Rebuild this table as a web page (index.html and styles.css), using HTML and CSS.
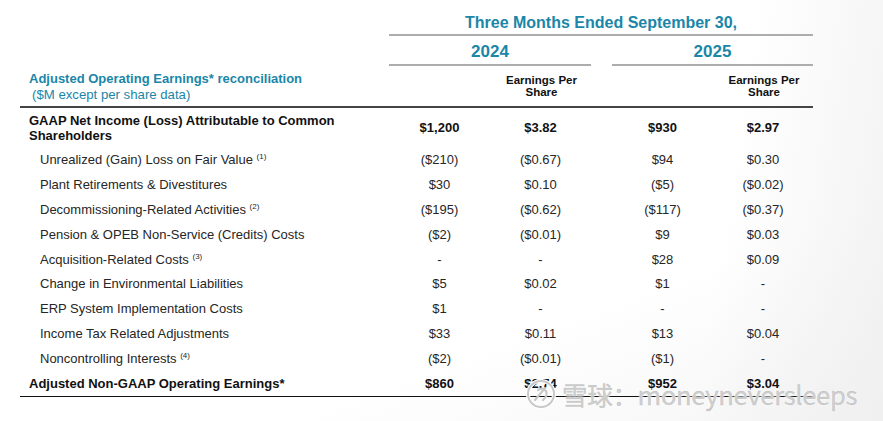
FILE: index.html
```html
<!DOCTYPE html>
<html>
<head>
<meta charset="utf-8">
<link rel="stylesheet" href="styles.css">
</head>
<body>
<div class="page">
  <div class="table">
    <div class="row head-title">
      <div></div>
      <div class="title">Three Months Ended September 30,</div>
    </div>
    <div class="row head-years">
      <div></div>
      <div class="year y1">2024</div>
      <div class="year y2">2025</div>
    </div>
    <div class="row head-sub">
      <div class="sect">
        <div class="sect-title">Adjusted Operating Earnings* reconciliation</div>
        <div class="sect-note">($M except per share data)</div>
      </div>
      <div></div>
      <div class="eps">Earnings Per<br>Share</div>
      <div></div>
      <div></div>
      <div class="eps">Earnings Per<br>Share</div>
    </div>

    <div class="row gaap bold">
      <div class="label">GAAP Net Income (Loss) Attributable to Common<br>Shareholders</div>
      <div class="num">$1,200</div><div class="num">$3.82</div><div></div><div class="num">$930</div><div class="num">$2.97</div>
    </div>
    <div class="row item">
      <div class="label">Unrealized (Gain) Loss on Fair Value <sup>(1)</sup></div>
      <div class="num">($210)</div><div class="num">($0.67)</div><div></div><div class="num">$94</div><div class="num">$0.30</div>
    </div>
    <div class="row item">
      <div class="label">Plant Retirements &amp; Divestitures</div>
      <div class="num">$30</div><div class="num">$0.10</div><div></div><div class="num">($5)</div><div class="num">($0.02)</div>
    </div>
    <div class="row item">
      <div class="label">Decommissioning-Related Activities <sup>(2)</sup></div>
      <div class="num">($195)</div><div class="num">($0.62)</div><div></div><div class="num">($117)</div><div class="num">($0.37)</div>
    </div>
    <div class="row item">
      <div class="label">Pension &amp; OPEB Non-Service (Credits) Costs</div>
      <div class="num">($2)</div><div class="num">($0.01)</div><div></div><div class="num">$9</div><div class="num">$0.03</div>
    </div>
    <div class="row item">
      <div class="label">Acquisition-Related Costs <sup>(3)</sup></div>
      <div class="num">-</div><div class="num">-</div><div></div><div class="num">$28</div><div class="num">$0.09</div>
    </div>
    <div class="row item">
      <div class="label">Change in Environmental Liabilities</div>
      <div class="num">$5</div><div class="num">$0.02</div><div></div><div class="num">$1</div><div class="num">-</div>
    </div>
    <div class="row item">
      <div class="label">ERP System Implementation Costs</div>
      <div class="num">$1</div><div class="num">-</div><div></div><div class="num">-</div><div class="num">-</div>
    </div>
    <div class="row item">
      <div class="label">Income Tax Related Adjustments</div>
      <div class="num">$33</div><div class="num">$0.11</div><div></div><div class="num">$13</div><div class="num">$0.04</div>
    </div>
    <div class="row item">
      <div class="label">Noncontrolling Interests <sup>(4)</sup></div>
      <div class="num">($2)</div><div class="num">($0.01)</div><div></div><div class="num">($1)</div><div class="num">-</div>
    </div>
    <div class="row total bold">
      <div class="label">Adjusted Non-GAAP Operating Earnings*</div>
      <div class="num">$860</div><div class="num">$2.74</div><div></div><div class="num">$952</div><div class="num">$3.04</div>
    </div>
  </div>

  <div class="watermark">
    <svg class="wm-icon" width="30" height="32" viewBox="0 0 30 32">
      <circle cx="15" cy="16" r="13" fill="none" stroke="#ffffff" stroke-width="4"/>
      <circle cx="15" cy="16" r="13" fill="none" stroke="#c8c8c8" stroke-width="2"/>
      <path d="M9 22 L19 10 M12 12 Q16 9 20 13 Q22 18 17 22" fill="none" stroke="#c8c8c8" stroke-width="2.2" stroke-linecap="round"/>
    </svg>
    <span class="wm-text">雪球：moneyneversleeps</span>
  </div>
</div>
</body>
</html>
```
FILE: styles.css
```css
html, body {
  margin: 0;
  padding: 0;
}
body {
  width: 883px;
  height: 421px;
  overflow: hidden;
  font-family: "Liberation Sans", Arial, sans-serif;
  color: #1e1e1e;
  background:
    linear-gradient(160deg, rgba(255,255,255,0) 70%, rgba(238,238,238,0.6) 100%),
    linear-gradient(98deg, #ffffff 80%, #f2f2f2 100%);
}
.page {
  position: relative;
  width: 883px;
  height: 421px;
}
.table {
  padding-left: 20px;
  width: 793px;
}
.row {
  display: grid;
  grid-template-columns: 369px 101px 101px 21px 101px 100px;
  align-items: center;
}
.head-title {
  height: 35px;
  align-items: end;
}
.title {
  grid-column: 2 / 7;
  text-align: center;
  color: #1a86a8;
  font-weight: bold;
  font-size: 16px;
  line-height: 20px;
  padding-bottom: 1px;
  border-bottom: 2px solid #adadad;
  margin-bottom: -1px;
}
.head-years {
  height: 31px;
}
.year {
  height: 30px;
  line-height: 30px;
  text-align: center;
  color: #1a86a8;
  font-weight: bold;
  font-size: 17px;
  border-bottom: 2px solid #adadad;
  box-sizing: border-box;
  padding-top: 1px;
}
.y1 { grid-column: 2 / 4; }
.y2 { grid-column: 5 / 7; }
.head-sub {
  height: 40px;
  border-bottom: 2px solid #444;
}
.sect {
  padding-left: 9px;
  padding-top: 2px;
}
.sect-title {
  color: #1a86a8;
  font-weight: bold;
  font-size: 13px;
  line-height: 16px;
}
.sect-note {
  color: #1a86a8;
  font-size: 13.2px;
  line-height: 16px;
  padding-left: 3px;
}
.eps {
  text-align: center;
  font-weight: bold;
  font-size: 11.5px;
  line-height: 12px;
  color: #111;
  padding-left: 2px;
}
.gaap {
  height: 39px;
}
.item, .total {
  height: 24.9px;
}
.total {
  border-bottom: 1.5px solid #111;
}
.label {
  font-size: 13px;
  line-height: 15px;
  padding-left: 9px;
}
.item .label {
  padding-left: 20px;
  color: #262626;
}
.bold .label, .bold .num {
  font-weight: bold;
  color: #111;
}
.num {
  text-align: center;
  font-size: 13px;
  color: #262626;
}
sup {
  font-size: 8px;
  vertical-align: 5px;
  line-height: 0;
}
.watermark {
  position: absolute;
  left: 526px;
  top: 378px;
  display: flex;
  align-items: center;
  gap: 6px;
}
.wm-text {
  font-family: "Noto Sans CJK SC", "Liberation Sans", sans-serif;
  font-size: 25.5px;
  line-height: 32px;
  color: rgba(195,195,195,0.8);
  -webkit-text-stroke: 0.5px rgba(170,170,170,0.5);
  text-shadow: 0 0 2px #fff, 0 0 2px #fff;
  letter-spacing: -0.3px;
}
```
